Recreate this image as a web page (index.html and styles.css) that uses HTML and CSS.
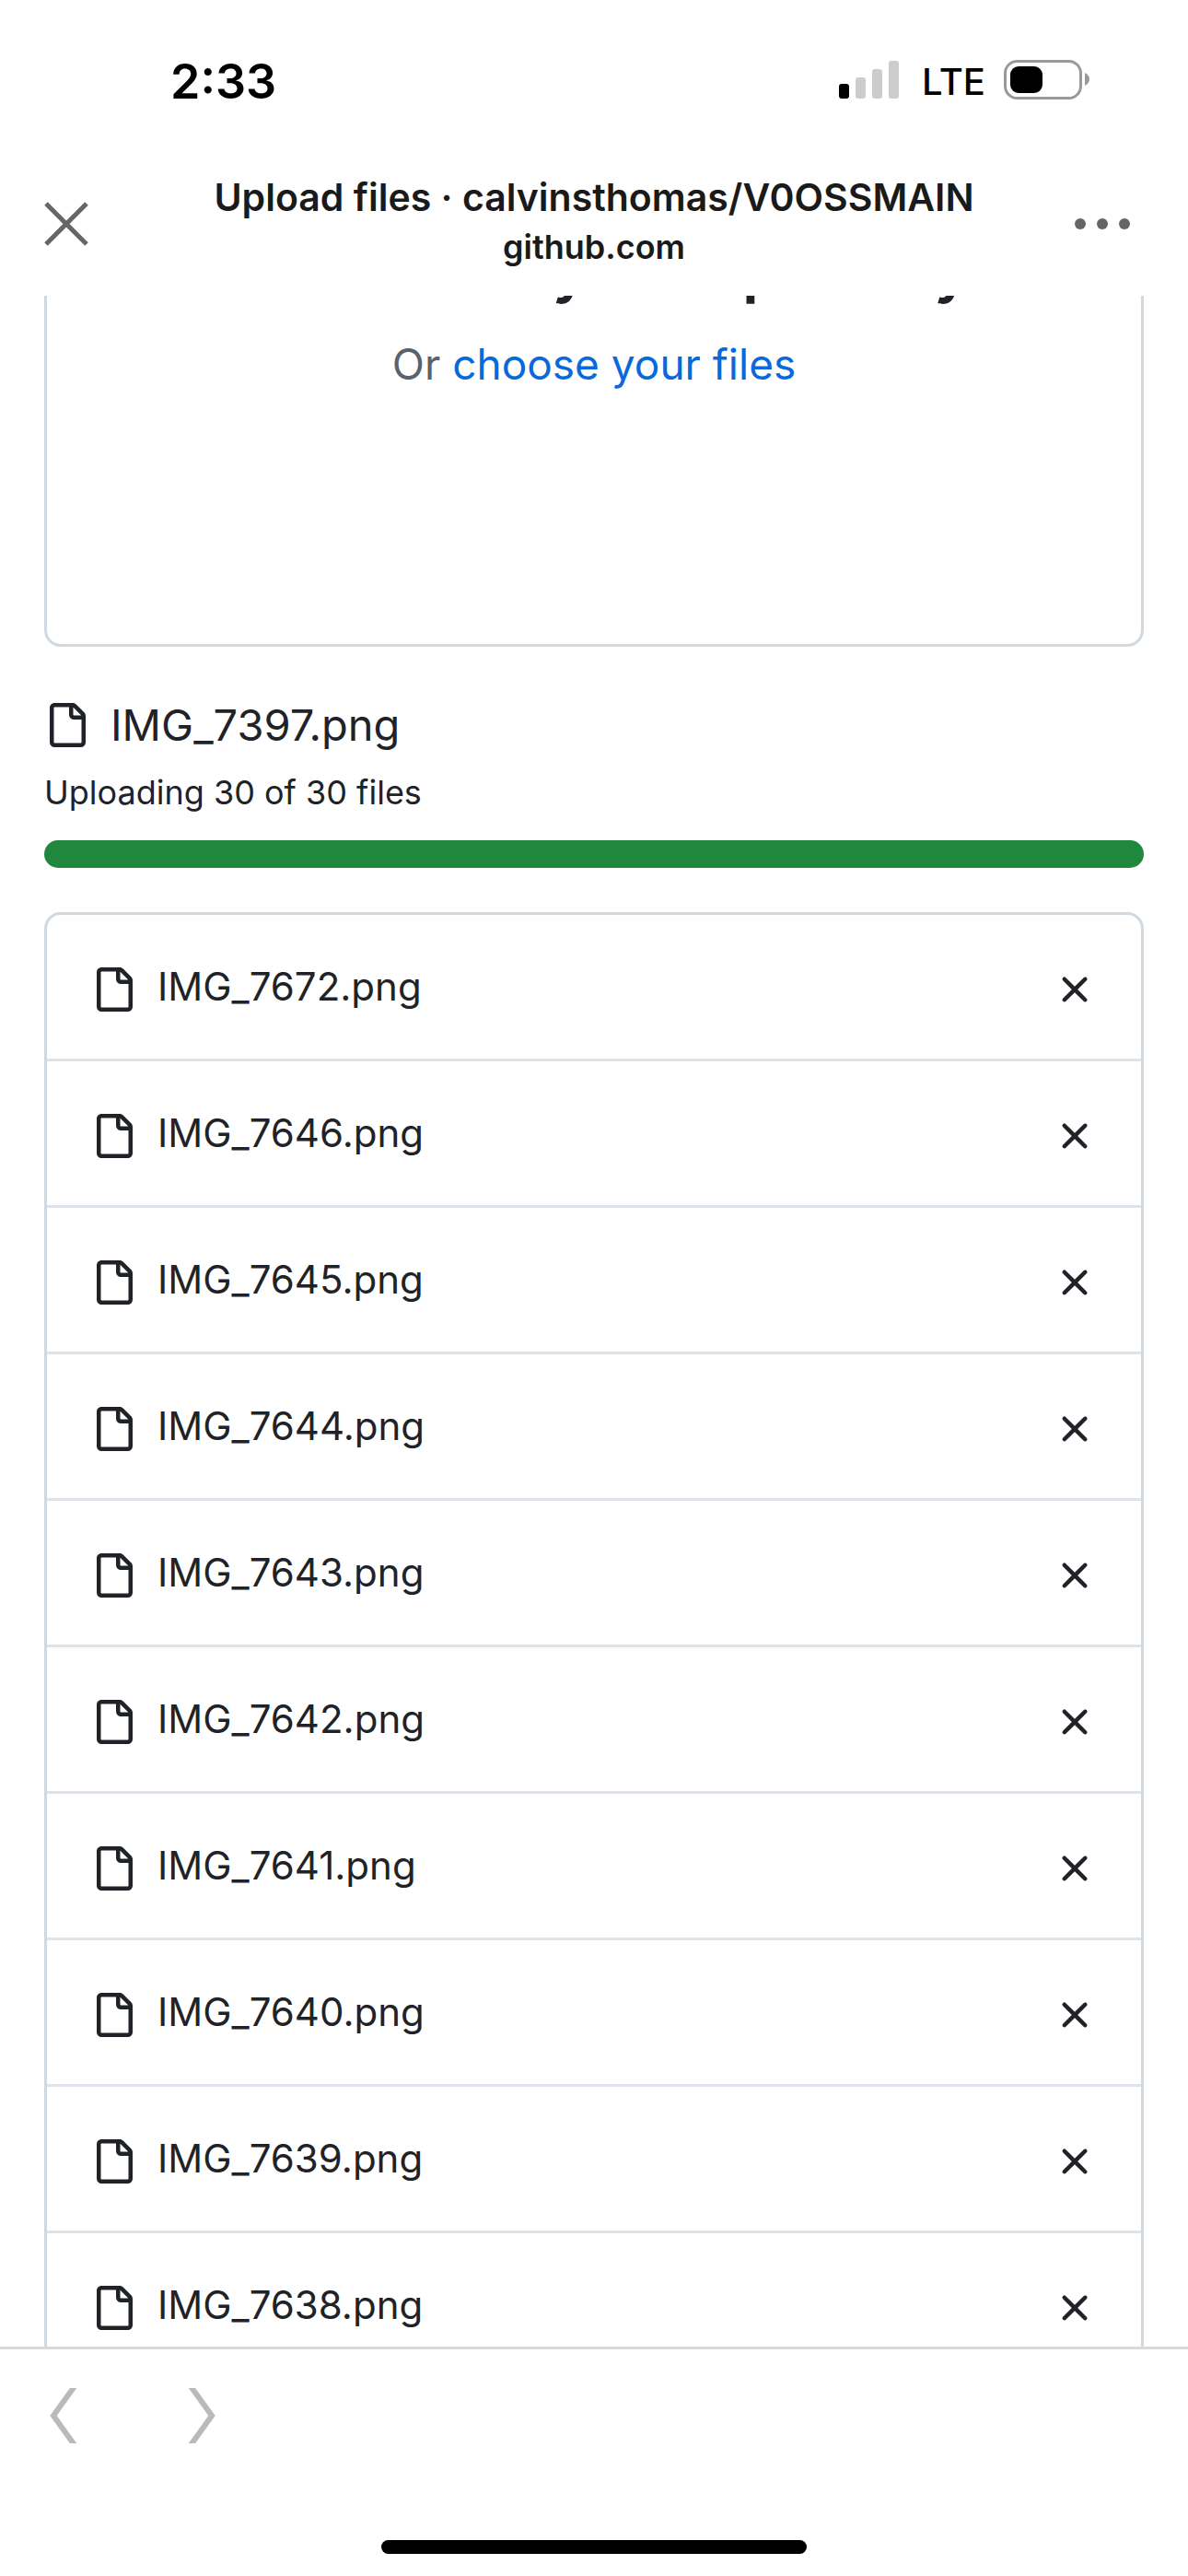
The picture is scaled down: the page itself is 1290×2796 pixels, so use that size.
FILE: index.html
```html
<!DOCTYPE html>
<html lang="en">
<head>
<meta charset="utf-8">
<meta name="viewport" content="width=device-width, initial-scale=1">
<title>Upload files · calvinsthomas/V0OSSMAIN</title>
<link rel="stylesheet" href="styles.css">
</head>
<body>
<svg class="sprite" aria-hidden="true">
  <symbol id="file" viewBox="0 0 16 16"><path d="M2 1.75C2 .784 2.784 0 3.75 0h6.586c.464 0 .909.184 1.237.513l2.914 2.914c.329.328.513.773.513 1.237v9.586A1.75 1.75 0 0 1 13.25 16h-9.5A1.75 1.75 0 0 1 2 14.25Zm1.75-.25a.25.25 0 0 0-.25.25v12.5c0 .138.112.25.25.25h9.5a.25.25 0 0 0 .25-.25V6h-2.75A1.75 1.75 0 0 1 9 4.25V1.5Zm6.75.062V4.25c0 .138.112.25.25.25h2.688l-.011-.013-2.914-2.914-.013-.011Z"/></symbol>
  <symbol id="x" viewBox="0 0 16 16"><path d="M3.72 3.72a.75.75 0 0 1 1.06 0L8 6.94l3.22-3.22a.749.749 0 0 1 1.275.326.749.749 0 0 1-.215.734L9.06 8l3.22 3.22a.749.749 0 0 1-.326 1.275.749.749 0 0 1-.734-.215L8 9.06l-3.22 3.22a.751.751 0 0 1-1.042-.018.751.751 0 0 1-.018-1.042L6.94 8 3.72 4.78a.75.75 0 0 1 0-1.06Z"/></symbol>
</svg>
<div class="app">
  <div class="status">
    <time class="clock">2:33</time>
    <div class="status-icons">
      <svg class="signal" width="66" height="44" viewBox="0 0 66 44" aria-hidden="true">
        <rect x="0" y="26" width="11" height="16" rx="3"/>
        <g fill="#ccc"><rect x="18" y="19" width="11" height="23" rx="3"/><rect x="36" y="10" width="11" height="32" rx="3"/><rect x="54" y="1" width="11" height="41" rx="3"/></g>
      </svg>
      <span class="network">LTE</span>
      <svg class="battery" width="94" height="44" viewBox="0 0 94 44" aria-hidden="true">
        <rect x="1.5" y="1.5" width="82" height="40" rx="13" fill="none" stroke="#999" stroke-width="3"/>
        <rect x="7" y="7" width="35" height="29" rx="9"/>
        <path d="M88 14c3 1.500 5 4 5 7s-2 5.500-5 7Z" fill="#999"/>
      </svg>
    </div>
  </div>
  <header class="bar">
    <button class="icon-button" type="button" aria-label="Close">
      <svg width="48" height="48" viewBox="0 0 48 48" fill="none" stroke="#666" stroke-width="5"><path d="M2 2 46 46M46 2 2 46"/></svg>
    </button>
    <div class="page-name">
      <h1 class="title">Upload files · calvinsthomas/V0OSSMAIN</h1>
      <p class="domain">github.com</p>
    </div>
    <button class="icon-button more" type="button" aria-label="More options">
      <svg width="60" height="12" viewBox="0 0 60 12" fill="#666"><circle cx="6" cy="6" r="6"/><circle cx="30" cy="6" r="6"/><circle cx="54" cy="6" r="6"/></svg>
    </button>
  </header>
  <main class="content">
    <section class="dropzone">
      <h2 class="drop-title">Drag additional files here to<br>add them to your repository</h2>
      <p class="drop-hint">Or <a href="#choose">choose your files</a></p>
    </section>
    <section class="progress">
      <div class="current"><svg class="icon" aria-hidden="true"><use href="#file"/></svg><span>IMG_7397.png</span></div>
      <label class="progress-label" for="upload">Uploading 30 of 30 files</label>
      <progress class="meter" id="upload" value="30" max="30"></progress>
    </section>
    <ul class="files">
      <li class="file"><svg class="icon" aria-hidden="true"><use href="#file"/></svg><span class="name">IMG_7672.png</span><button class="remove" type="button" aria-label="Remove IMG_7672.png"><svg class="icon"><use href="#x"/></svg></button></li>
      <li class="file"><svg class="icon" aria-hidden="true"><use href="#file"/></svg><span class="name">IMG_7646.png</span><button class="remove" type="button" aria-label="Remove IMG_7646.png"><svg class="icon"><use href="#x"/></svg></button></li>
      <li class="file"><svg class="icon" aria-hidden="true"><use href="#file"/></svg><span class="name">IMG_7645.png</span><button class="remove" type="button" aria-label="Remove IMG_7645.png"><svg class="icon"><use href="#x"/></svg></button></li>
      <li class="file"><svg class="icon" aria-hidden="true"><use href="#file"/></svg><span class="name">IMG_7644.png</span><button class="remove" type="button" aria-label="Remove IMG_7644.png"><svg class="icon"><use href="#x"/></svg></button></li>
      <li class="file"><svg class="icon" aria-hidden="true"><use href="#file"/></svg><span class="name">IMG_7643.png</span><button class="remove" type="button" aria-label="Remove IMG_7643.png"><svg class="icon"><use href="#x"/></svg></button></li>
      <li class="file"><svg class="icon" aria-hidden="true"><use href="#file"/></svg><span class="name">IMG_7642.png</span><button class="remove" type="button" aria-label="Remove IMG_7642.png"><svg class="icon"><use href="#x"/></svg></button></li>
      <li class="file"><svg class="icon" aria-hidden="true"><use href="#file"/></svg><span class="name">IMG_7641.png</span><button class="remove" type="button" aria-label="Remove IMG_7641.png"><svg class="icon"><use href="#x"/></svg></button></li>
      <li class="file"><svg class="icon" aria-hidden="true"><use href="#file"/></svg><span class="name">IMG_7640.png</span><button class="remove" type="button" aria-label="Remove IMG_7640.png"><svg class="icon"><use href="#x"/></svg></button></li>
      <li class="file"><svg class="icon" aria-hidden="true"><use href="#file"/></svg><span class="name">IMG_7639.png</span><button class="remove" type="button" aria-label="Remove IMG_7639.png"><svg class="icon"><use href="#x"/></svg></button></li>
      <li class="file"><svg class="icon" aria-hidden="true"><use href="#file"/></svg><span class="name">IMG_7638.png</span><button class="remove" type="button" aria-label="Remove IMG_7638.png"><svg class="icon"><use href="#x"/></svg></button></li>
    </ul>
  </main>
  <footer class="toolbar">
    <nav class="history">
      <button class="icon-button" type="button" aria-label="Back"><svg width="30" height="60" viewBox="0 0 30 60" fill="none" stroke="#bababa" stroke-width="6"><path d="M27-2 4 30 27 62"/></svg></button>
      <button class="icon-button" type="button" aria-label="Forward"><svg width="30" height="60" viewBox="0 0 30 60" fill="none" stroke="#bababa" stroke-width="6"><path d="M3-2 26 30 3 62"/></svg></button>
    </nav>
    <div class="home-indicator"></div>
  </footer>
</div>
</body>
</html>
```

FILE: styles.css
```css
* { box-sizing: border-box; }

body {
  margin: 0;
  background: #fff;
  color: #1f2328;
  font-family: Inter, "Liberation Sans", sans-serif;
}

h1, h2, p, ul { margin: 0; padding: 0; }

button {
  padding: 0;
  border: 0;
  background: none;
  color: inherit;
  font: inherit;
}

svg { display: block; }

.sprite { position: absolute; width: 0; height: 0; }

.app {
  display: flex;
  flex-direction: column;
  height: 100vh;
}

/* Status bar */
.status {
  display: flex;
  align-items: center;
  justify-content: space-between;
  height: 174px;
  padding: 0 106px 0 185px;
  color: #000;
}

.clock, .network { padding-top: 4px; }
.clock { font-size: 52px; font-weight: 600; line-height: 64px; }
.status-icons { display: flex; align-items: center; }
.network { margin: 0 20px 0 24px; font-size: 40px; font-weight: 500; line-height: 48px; }

/* Browser header */
.bar {
  display: grid;
  grid-template-columns: 1fr auto 1fr;
  align-items: center;
  padding: 10px 63px 19px 48px;
}

.bar .icon-button { justify-self: start; }
.bar .more { justify-self: end; }

.bar { padding-right: 48px; }
.more { margin-right: 15px; }

.page-name { padding-bottom: 10px; color: #1a1a1a; text-align: center; }
.title { font-size: 41px; font-weight: 600; line-height: 60px; }
.domain { font-size: 36px; font-weight: 600; line-height: 48px; }

/* Page content, clipped between the header and the toolbar */
.content {
  flex: 1;
  min-height: 0;
  padding: 0 48px;
  overflow: hidden;
}

.dropzone {
  height: 518px;
  margin-top: -137px;
  border: 3px solid #d1d9e0;
  border-radius: 18px;
  text-align: center;
}

.drop-title { font-size: 60px; font-weight: 700; line-height: 72px; }
.drop-hint { margin-top: 28px; color: #59636e; font-size: 46px; line-height: 72px; }
.drop-hint a { color: #0969da; text-decoration: none; }

.icon { width: 48px; height: 48px; fill: currentColor; flex: none; }

.progress { padding: 49px 0 48px; }
.current { display: flex; align-items: center; gap: 24px; font-size: 47px; line-height: 72px; }
.progress-label { display: block; font-size: 36px; line-height: 74px; }

.meter {
  display: block;
  width: 100%;
  height: 30px;
  margin-top: 15px;
  border: 0;
  border-radius: 15px;
  background: #1f883d;
  overflow: hidden;
  appearance: none;
}

.meter::-webkit-progress-bar { background: #eff2f5; }
.meter::-webkit-progress-value { background: #1f883d; }

.files {
  border: 3px solid #d1d9e0;
  border-radius: 18px;
  list-style: none;
}

.file {
  display: flex;
  align-items: center;
  gap: 24px;
  padding: 48px;
  font-size: 42px;
  line-height: 60px;
}

.file + .file { border-top: 3px solid #dee3ea; }
.file .icon { margin-top: 6px; }
.name { flex: 1; }

/* Bottom toolbar */
.toolbar {
  padding: 42px 54px 24px;
  border-top: 3px solid #d9d9d9;
}

.history { display: flex; gap: 120px; }

.home-indicator {
  width: 462px;
  max-width: 100%;
  height: 15px;
  margin: 105px auto 0;
  border-radius: 8px;
  background: #000;
}
```
